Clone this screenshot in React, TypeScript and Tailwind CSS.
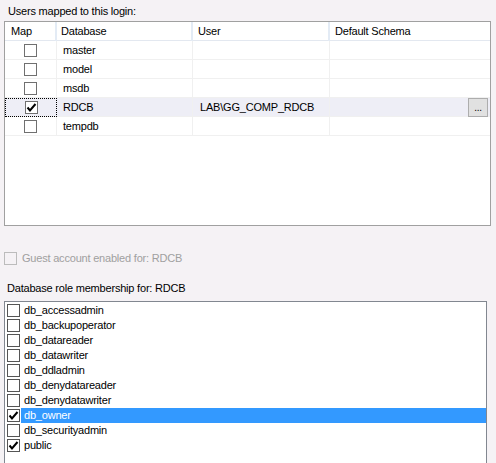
import React from 'react';

const font = { fontFamily: '"Liberation Sans", Arial, sans-serif' };

const Tick = () => (
  <svg width="11" height="11" viewBox="0 0 11 11" className="block">
    <path d="M1.5 5.5 L4 8.5 L9.5 2" fill="none" stroke="#000" strokeWidth="2" />
  </svg>
);

const Box = ({ checked = false, border = 'border-[#707070]' }: { checked?: boolean; border?: string }) => (
  <div className={`w-[13px] h-[13px] border ${border} bg-white flex items-center justify-center shrink-0`}>
    {checked && <Tick />}
  </div>
);

const App = () => {
  const dbs = [
    { name: 'master', user: '', mapped: false },
    { name: 'model', user: '', mapped: false },
    { name: 'msdb', user: '', mapped: false },
    { name: 'RDCB', user: 'LAB\\GG_COMP_RDCB', mapped: true },
    { name: 'tempdb', user: '', mapped: false },
  ];

  const roles = [
    { name: 'db_accessadmin', on: false },
    { name: 'db_backupoperator', on: false },
    { name: 'db_datareader', on: false },
    { name: 'db_datawriter', on: false },
    { name: 'db_ddladmin', on: false },
    { name: 'db_denydatareader', on: false },
    { name: 'db_denydatawriter', on: false },
    { name: 'db_owner', on: true, selected: true },
    { name: 'db_securityadmin', on: false },
    { name: 'public', on: true },
  ];

  return (
    <div
      className="w-[496px] h-[463px] bg-[#f5f2f5] overflow-hidden flex flex-col text-[11px] tracking-[-0.2px] text-black"
      style={font}
    >
      {/* Users mapped */}
      <div className="h-[21px] pl-[8px] pt-[5px] leading-[13px]">Users mapped to this login:</div>
      <div className="ml-[4px] w-[487px] h-[205px] border border-[#a0a0a0] bg-white shrink-0">
        <div className="grid grid-cols-[52px_136px_137px_1fr] h-[19px] border-b border-[#e3e8f0] leading-[19px]">
          <div className="px-[6px] border-r-2 border-[#e3ebf5]">Map</div>
          <div className="px-[4px] border-r-2 border-[#e3ebf5]">Database</div>
          <div className="px-[5px] border-r-2 border-[#e3ebf5]">User</div>
          <div className="px-[5px]">Default Schema</div>
        </div>
        {dbs.map((d) => (
          <div
            key={d.name}
            className={`grid grid-cols-[52px_136px_137px_1fr] h-[19px] border-b border-[#f0f0f0] ${d.mapped ? 'bg-[#eeeef6]' : ''}`}
          >
            <div
              className={`flex items-center justify-center border-r border-[#f0f0f0] ${d.mapped ? 'border border-dotted border-black' : ''}`}
            >
              <Box checked={d.mapped} />
            </div>
            <div className="px-[6px] leading-[18px] border-r border-[#f0f0f0]">{d.name}</div>
            <div className="px-[7px] leading-[18px] border-r border-[#f0f0f0]">{d.user}</div>
            <div className="flex justify-end items-center pr-[2px]">
              {d.mapped && (
                <div className="w-[20px] h-[19px] border border-[#adadad] bg-[#e1e1e1] text-[10px] leading-[17px] text-center">
                  ...
                </div>
              )}
            </div>
          </div>
        ))}
      </div>

      {/* Guest */}
      <div className="mt-[26px] pl-[4px] flex items-center gap-[5px] h-[13px]">
        <div className="w-[13px] h-[13px] border border-[#bcbcbc]" />
        <span className="text-[#a0a0a0]">Guest account enabled for: RDCB</span>
      </div>

      {/* Roles */}
      <div className="mt-[16px] pl-[7px] h-[14px] leading-[14px]">Database role membership for: RDCB</div>
      <div className="mt-[6px] ml-[4px] w-[483px] flex-1 border border-b-0 border-[#828790] bg-white pt-[1px] pl-[2px]">
        {roles.map((r) => (
          <div key={r.name} className="flex items-center h-[15px]">
            <Box checked={r.on} border="border-[#555]" />
            <div
              className={`ml-[1px] flex-1 h-[15px] pl-[3px] leading-[15px] ${r.selected ? 'bg-[#3399ff] text-white' : ''}`}
            >
              {r.name}
            </div>
          </div>
        ))}
      </div>
    </div>
  );
};

export default App;
